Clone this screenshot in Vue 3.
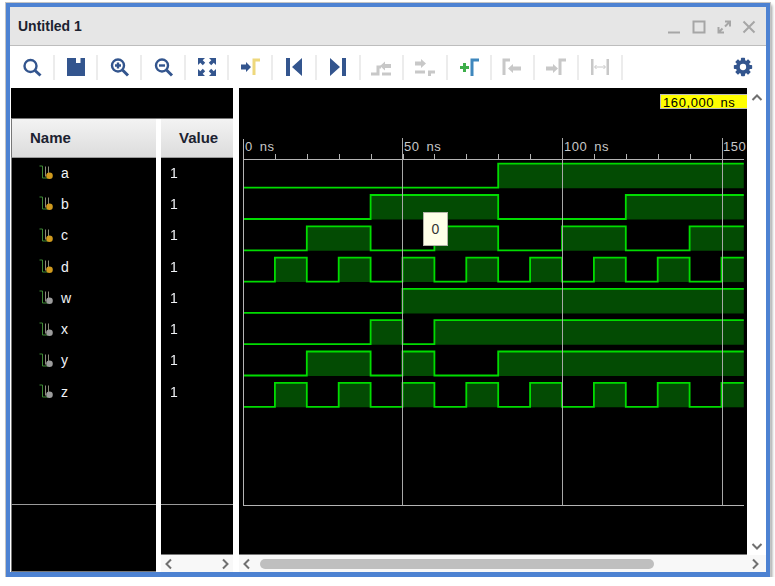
<template>
  <div class="window">
    <div class="titlebar">
      <span class="title">Untitled 1</span>
      <div class="win-controls">
        <svg width="14" height="14" viewBox="0 0 14 14"><path d="M1 12.500h12" /></svg>
        <svg width="14" height="14" viewBox="0 0 14 14"><path d="M1.500 1.500h11v11h-11z" /></svg>
        <svg width="14" height="14" viewBox="0 0 14 14"><path d="M8 1.500h5v5M13 1.500L8 6.500M1.500 7v5.500H7M1.500 12.500l4-4" /></svg>
        <svg width="14" height="14" viewBox="0 0 14 14"><path d="M1.500 1.500l11 11M12.500 1.500l-11 11" /></svg>
      </div>
    </div>

    <div class="toolbar">
      <div class="tool">
        <svg viewBox="0 0 24 24"><circle class="ln" cx="10.500" cy="11" r="6" /><path class="ln thick" d="M15 15.500l5.500 5" /></svg>
      </div>
      <div class="tool">
        <svg viewBox="0 0 24 24"><path class="solid" fill-rule="evenodd" d="M3 3h18v18H3zM12 3v5h4.500V3z" /></svg>
      </div>
      <div class="tool">
        <svg viewBox="0 0 24 24"><circle class="ln" cx="11" cy="10.500" r="6" /><path class="ln thick" d="M15.500 15l5.500 5.500" /><path class="ln" d="M8 10.500h6M11 7.500v6" /></svg>
      </div>
      <div class="tool">
        <svg viewBox="0 0 24 24"><circle class="ln" cx="11" cy="10.500" r="6" /><path class="ln thick" d="M15.500 15l5.500 5.500" /><path class="ln" d="M8 10.500h6" /></svg>
      </div>
      <div class="tool">
        <svg viewBox="0 0 24 24"><path class="solid" d="M3 3h7l-2.300 2.300 2.500 2.500-2.400 2.400-2.500-2.500L3 10zM21 3v7l-2.300-2.300-2.500 2.500-2.400-2.400 2.500-2.500L14 3zM3 21v-7l2.300 2.300 2.500-2.500 2.400 2.400-2.500 2.500L10 21zM21 21h-7l2.300-2.300-2.500-2.500 2.400-2.400 2.500 2.500L21 14z" /></svg>
      </div>
      <div class="tool">
        <svg viewBox="0 0 24 24"><path class="solid" d="M3 9.500h5V7l5 5-5 5v-2.500H3z" /><path class="yellow" d="M16 20V5h6" /></svg>
      </div>
      <div class="tool">
        <svg viewBox="0 0 24 24"><path class="solid" d="M4 3h4v18H4zM20 3v18l-10-9z" /></svg>
      </div>
      <div class="tool">
        <svg viewBox="0 0 24 24"><path class="solid" d="M4 3v18l10-9zM16 3h4v18h-4z" /></svg>
      </div>
      <div class="tool">
        <svg viewBox="0 0 24 24"><path class="gray-ln wide" d="M2 19h7v-7h3" /><path class="gray" d="M11 11l5-4.500V9h6v4h-6v2.500z" /><path class="gray-ln wide" d="M13 19h9" /></svg>
      </div>
      <div class="tool">
        <svg viewBox="0 0 24 24"><path class="gray" d="M13 8.500L8 4v2.500H2v4h6V13z" /><path class="gray-ln wide" d="M2 17h10M15 17h7M16.500 17v4" /></svg>
      </div>
      <div class="tool">
        <svg viewBox="0 0 24 24"><path class="green" d="M3 12.500h9M7.500 8v9" /><path class="blue" d="M15 21V5h7" /></svg>
      </div>
      <div class="tool">
        <svg viewBox="0 0 24 24"><path class="gray-ln wide" d="M4 20V5h6" /><path class="gray" d="M8 13.500l5-4.500v2.500h8v4h-8V18z" /></svg>
      </div>
      <div class="tool">
        <svg viewBox="0 0 24 24"><path class="gray" d="M14 13.500L9 9v2.500H2v4h7V18z" /><path class="gray-ln wide" d="M16 20V5h6" /></svg>
      </div>
      <div class="tool">
        <svg viewBox="0 0 24 24"><path class="gray" d="M3 4h2.500v16H3zM18.500 4H21v16h-2.500z" /><path class="gray-ln thin" d="M7 12h10M8.500 10L6.500 12l2 2M15.500 10l2 2-2 2" /></svg>
      </div>
      <div class="tool-spacer"></div>
      <div class="gear">
        <svg viewBox="0 0 24 24">
          <rect v-for="a in gearAngles" :key="a" class="solid" x="9.500" y="1" width="5" height="22" rx="1" :transform="`rotate(${a} 12 12)`" />
          <circle class="solid" cx="12" cy="12" r="8.500" />
          <circle cx="12" cy="12" r="3.800" fill="#fff" />
        </svg>
      </div>
    </div>

    <div class="panes">
      <div class="left-pane">
        <div class="top-strip"></div>
        <div class="columns">
          <div class="col name-col">
            <div class="col-head">Name</div>
            <div class="col-list">
              <div v-for="s in signals" :key="s.name" class="row">
                <svg class="sig-icon" width="15" height="15" viewBox="0 0 15 15">
                  <path d="M0.500 1h3v12h6" fill="none" stroke="#3f8a35" stroke-width="1" />
                  <path d="M6.500 1.500v10M9.500 1.500v7" fill="none" stroke="#8a8a7a" stroke-width="1" />
                  <circle cx="10.500" cy="10.800" r="3.300" :fill="s.input ? '#d09a1e' : '#9c9c9c'" />
                </svg>
                <span>{{ s.name }}</span>
              </div>
            </div>
            <div class="col-foot tall"></div>
          </div>
          <div class="col value-col">
            <div class="col-head">Value</div>
            <div class="col-list values">
              <div v-for="s in signals" :key="s.name" class="row">1</div>
            </div>
            <div class="col-foot"></div>
            <div class="hscroll">
              <svg class="chev" width="10" height="12" viewBox="0 0 10 12"><path d="M7 1.500L2.500 6 7 10.500" /></svg>
              <svg class="chev" width="10" height="12" viewBox="0 0 10 12"><path d="M3 1.500L7.500 6 3 10.500" /></svg>
            </div>
          </div>
        </div>
      </div>

      <div class="wave-side">
        <div class="wave-row">
          <div class="wave-pane">
            <svg class="wave-svg" width="508" height="466" viewBox="239 88 508 466">
              <g v-for="(s, i) in signals" :key="s.name">
                <path v-for="h in s.high" :key="h[0]" class="band" :d="bandPath(h, i)" />
                <path class="trace" :d="tracePath(s.high, i)" />
              </g>
              <path class="axis" d="M243 159.500h501M243.500 139v366M243 505.500h501" />
              <path class="tick" :d="tickPath" />
              <path class="grid" d="M402.500 138v367M562.500 138v367M722.500 138v367" />
              <text v-for="l in timeLabels" :key="l.x" class="time" :x="l.x" y="151">{{ l.text }}</text>
              <rect x="660.500" y="94.500" width="87" height="14" fill="#ffff00" stroke="#bbb" stroke-width="1" />
              <text class="cursor-time" x="663" y="107">160,000 ns</text>
            </svg>
            <div class="tip">0</div>
          </div>
          <div class="vscroll">
            <svg class="chev" width="12" height="10" viewBox="0 0 12 10"><path d="M1.500 7L6 2.500 10.500 7" /></svg>
            <svg class="chev" width="12" height="10" viewBox="0 0 12 10"><path d="M1.500 3L6 7.500 10.500 3" /></svg>
          </div>
        </div>
        <div class="hscroll main">
          <svg class="chev" width="10" height="12" viewBox="0 0 10 12"><path d="M7 1.500L2.500 6 7 10.500" /></svg>
          <div class="track"><div class="thumb"></div></div>
          <svg class="chev" width="10" height="12" viewBox="0 0 10 12"><path d="M3 1.500L7.500 6 3 10.500" /></svg>
        </div>
      </div>
    </div>
  </div>
</template>

<script setup>
// time scale of the wave window
const X0 = 243
const PX_PER_NS = 3.19
const END_NS = 157
const FIRST_BASE = 187.7
const ROW_STEP = 31.3
const HIGH_H = 24

const clock = [[10, 20], [30, 40], [50, 60], [70, 80], [90, 100], [110, 120], [130, 140], [150, END_NS]]

const signals = [
  { name: 'a', input: true, high: [[80, END_NS]] },
  { name: 'b', input: true, high: [[40, 80], [120, END_NS]] },
  { name: 'c', input: true, high: [[20, 40], [60, 80], [100, 120], [140, END_NS]] },
  { name: 'd', input: true, high: clock },
  { name: 'w', input: false, high: [[50, END_NS]] },
  { name: 'x', input: false, high: [[40, 50], [60, END_NS]] },
  { name: 'y', input: false, high: [[20, 40], [50, 60], [80, END_NS]] },
  { name: 'z', input: false, high: clock }
]

const gearAngles = [0, 45, 90, 135]

// the last label runs into the pane edge, only "150" is visible
const timeLabels = [
  { x: 245, text: '0 ns' },
  { x: 404, text: '50 ns' },
  { x: 564, text: '100 ns' },
  { x: 723, text: '150' }
]

const toX = (ns) => (X0 + ns * PX_PER_NS).toFixed(1)
const baseY = (i) => FIRST_BASE + i * ROW_STEP

const bandPath = (h, i) => {
  const b = baseY(i)
  return `M${toX(h[0])} ${b - HIGH_H}H${toX(h[1])}V${b + 0.5}H${toX(h[0])}Z`
}

const tracePath = (high, i) => {
  const b = baseY(i)
  const t = b - HIGH_H
  let d = `M${X0} ${b}`
  for (const h of high) {
    d += `H${toX(h[0])}V${t}H${toX(h[1])}`
    if (h[1] < END_NS) d += `V${b}`
  }
  if (high[high.length - 1][1] < END_NS) d += `H${toX(END_NS)}`
  return d
}

let ticks = ''
for (let ns = 10; ns < END_NS; ns += 10) {
  ticks += `M${Math.round(X0 + ns * PX_PER_NS) + 0.5} 154v5`
}
const tickPath = ticks
</script>

<style>
html, body {
  margin: 0;
  background: #fff;
}
</style>

<style scoped>
.window {
  box-sizing: border-box;
  width: 764px;
  height: 574px;
  margin: 3px 0 0 6px;
  border: solid #4d82d2;
  border-width: 4px 4px 5px 4px;
  box-shadow: 0 0 0 1px #c4c4c4, 2px 2px 3px #999;
  background: #fff;
  display: flex;
  flex-direction: column;
  font-family: "Liberation Sans", Arial, sans-serif;
}
.titlebar {
  height: 38px;
  flex: none;
  display: flex;
  align-items: center;
  justify-content: space-between;
  background: #e6e6e6;
  border-bottom: 1px solid #bdbdbd;
  padding: 0 10px 0 8px;
}
.title {
  font-size: 14px;
  font-weight: bold;
  color: #1c2230;
}
.win-controls {
  display: flex;
  gap: 11px;
  padding-top: 1px;
}
.win-controls path {
  fill: none;
  stroke: #a6a6a6;
  stroke-width: 2;
}
.toolbar {
  height: 42px;
  flex: none;
  display: flex;
  align-items: center;
  padding-left: 1px;
}
.tool {
  box-sizing: border-box;
  width: 43.7px;
  height: 25px;
  border-right: 2px solid #ececec;
  display: flex;
  align-items: center;
  justify-content: center;
}
.tool svg {
  width: 24px;
  height: 24px;
}
.gear svg {
  width: 20px;
  height: 20px;
}
.tool-spacer {
  flex: 1;
}
.gear {
  width: 20px;
  margin-right: 13px;
  display: flex;
}
.ln {
  fill: none;
  stroke: #33558e;
  stroke-width: 2.4;
}
.ln.thick {
  stroke-width: 3;
}
.solid {
  fill: #33558e;
}
.yellow {
  fill: none;
  stroke: #eed87c;
  stroke-width: 3;
}
.gray {
  fill: #c8c8c8;
}
.gray-ln {
  fill: none;
  stroke: #c8c8c8;
  stroke-width: 2;
}
.gray-ln.wide {
  stroke-width: 3;
}
.gray-ln.thin {
  stroke-width: 1;
}
.green {
  fill: none;
  stroke: #3eae4a;
  stroke-width: 3;
}
.blue {
  fill: none;
  stroke: #3f87bd;
  stroke-width: 3;
}
.panes {
  flex: 1;
  min-height: 0;
  display: flex;
  gap: 6px;
  padding-left: 1px;
}
.left-pane {
  width: 222px;
  flex: none;
  display: flex;
  flex-direction: column;
}
.top-strip {
  height: 30px;
  flex: none;
  background: #000;
  border-bottom: 1px solid #777;
}
.columns {
  flex: 1;
  min-height: 0;
  display: flex;
  gap: 5px;
}
.col {
  display: flex;
  flex-direction: column;
}
.name-col {
  width: 145px;
}
.value-col {
  width: 72px;
}
.col-head {
  box-sizing: border-box;
  height: 39px;
  flex: none;
  padding-bottom: 2px;
  background: linear-gradient(#f3f3f3, #dcdcdc);
  border-bottom: 1px solid #9a9a9a;
  font-size: 15px;
  font-weight: bold;
  color: #1c2230;
  display: flex;
  align-items: center;
}
.name-col .col-head {
  padding-left: 18px;
}
.value-col .col-head {
  padding-left: 18px;
}
.col-list {
  box-sizing: border-box;
  height: 347px;
  flex: none;
  background: #000;
  border-bottom: 1px solid #9a9a9a;
}
/* own layer: the digits get neutral antialiasing instead of an amber fringe */
.values {
  will-change: transform;
}
.row {
  box-sizing: border-box;
  height: 31.3px;
  padding-bottom: 2px;
  display: flex;
  align-items: center;
  color: #f0f2f6;
  font-size: 14px;
}
.name-col .row {
  padding-left: 27px;
  gap: 7px;
}
.value-col .row {
  padding-left: 9px;
}
.sig-icon {
  flex: none;
}
.col-foot {
  flex: 1;
  background: #000;
  border-bottom: 1px solid #777;
}
.col-foot.tall {
  border-left: 1px solid #777;
}
.name-col .col-list, .name-col .col-head {
  border-left: 1px solid #777;
}
.hscroll {
  height: 17px;
  flex: none;
  background: #f8f8f8;
  display: flex;
  align-items: center;
  justify-content: space-between;
  padding: 0 3px;
}
.wave-side {
  flex: 1;
  min-width: 0;
  display: flex;
  flex-direction: column;
}
.wave-row {
  flex: 1;
  min-height: 0;
  display: flex;
}
.wave-pane {
  width: 508px;
  flex: none;
  position: relative;
  background: #000;
  border-bottom: 1px solid #777;
}
.wave-svg {
  display: block;
}
.band {
  fill: #034b03;
}
.trace {
  fill: none;
  stroke: #00dc00;
  stroke-width: 1.8;
}
.axis, .tick {
  fill: none;
  stroke: #b4b4b4;
  stroke-width: 1;
}
.grid {
  fill: none;
  stroke: #a8a8a8;
  stroke-width: 1;
}
.time {
  fill: #c8c8c8;
  font-size: 13px;
  letter-spacing: 0.5px;
  word-spacing: 3px;
}
.cursor-time {
  fill: #000;
  font-size: 13px;
  letter-spacing: 0.6px;
  word-spacing: 2px;
}
.tip {
  position: absolute;
  left: 184px;
  top: 124px;
  box-sizing: border-box;
  width: 25px;
  height: 34px;
  background: #ffffe8;
  border: 1px solid #b4b4a8;
  color: #333;
  font-size: 14px;
  display: flex;
  align-items: center;
  justify-content: center;
}
.vscroll {
  width: 19px;
  flex: none;
  display: flex;
  flex-direction: column;
  align-items: center;
  justify-content: space-between;
  padding: 5px 0 4px;
  box-sizing: border-box;
}
.hscroll.main {
  padding: 0 6px 0 3px;
}
.track {
  flex: 1;
  height: 10px;
  margin: 0 0 0 8px;
}
.thumb {
  width: 394px;
  height: 10px;
  border-radius: 5px;
  background: #bfbfbf;
}
.chev {
  flex: none;
}
.chev path {
  fill: none;
  stroke: #707070;
  stroke-width: 2;
}
</style>
